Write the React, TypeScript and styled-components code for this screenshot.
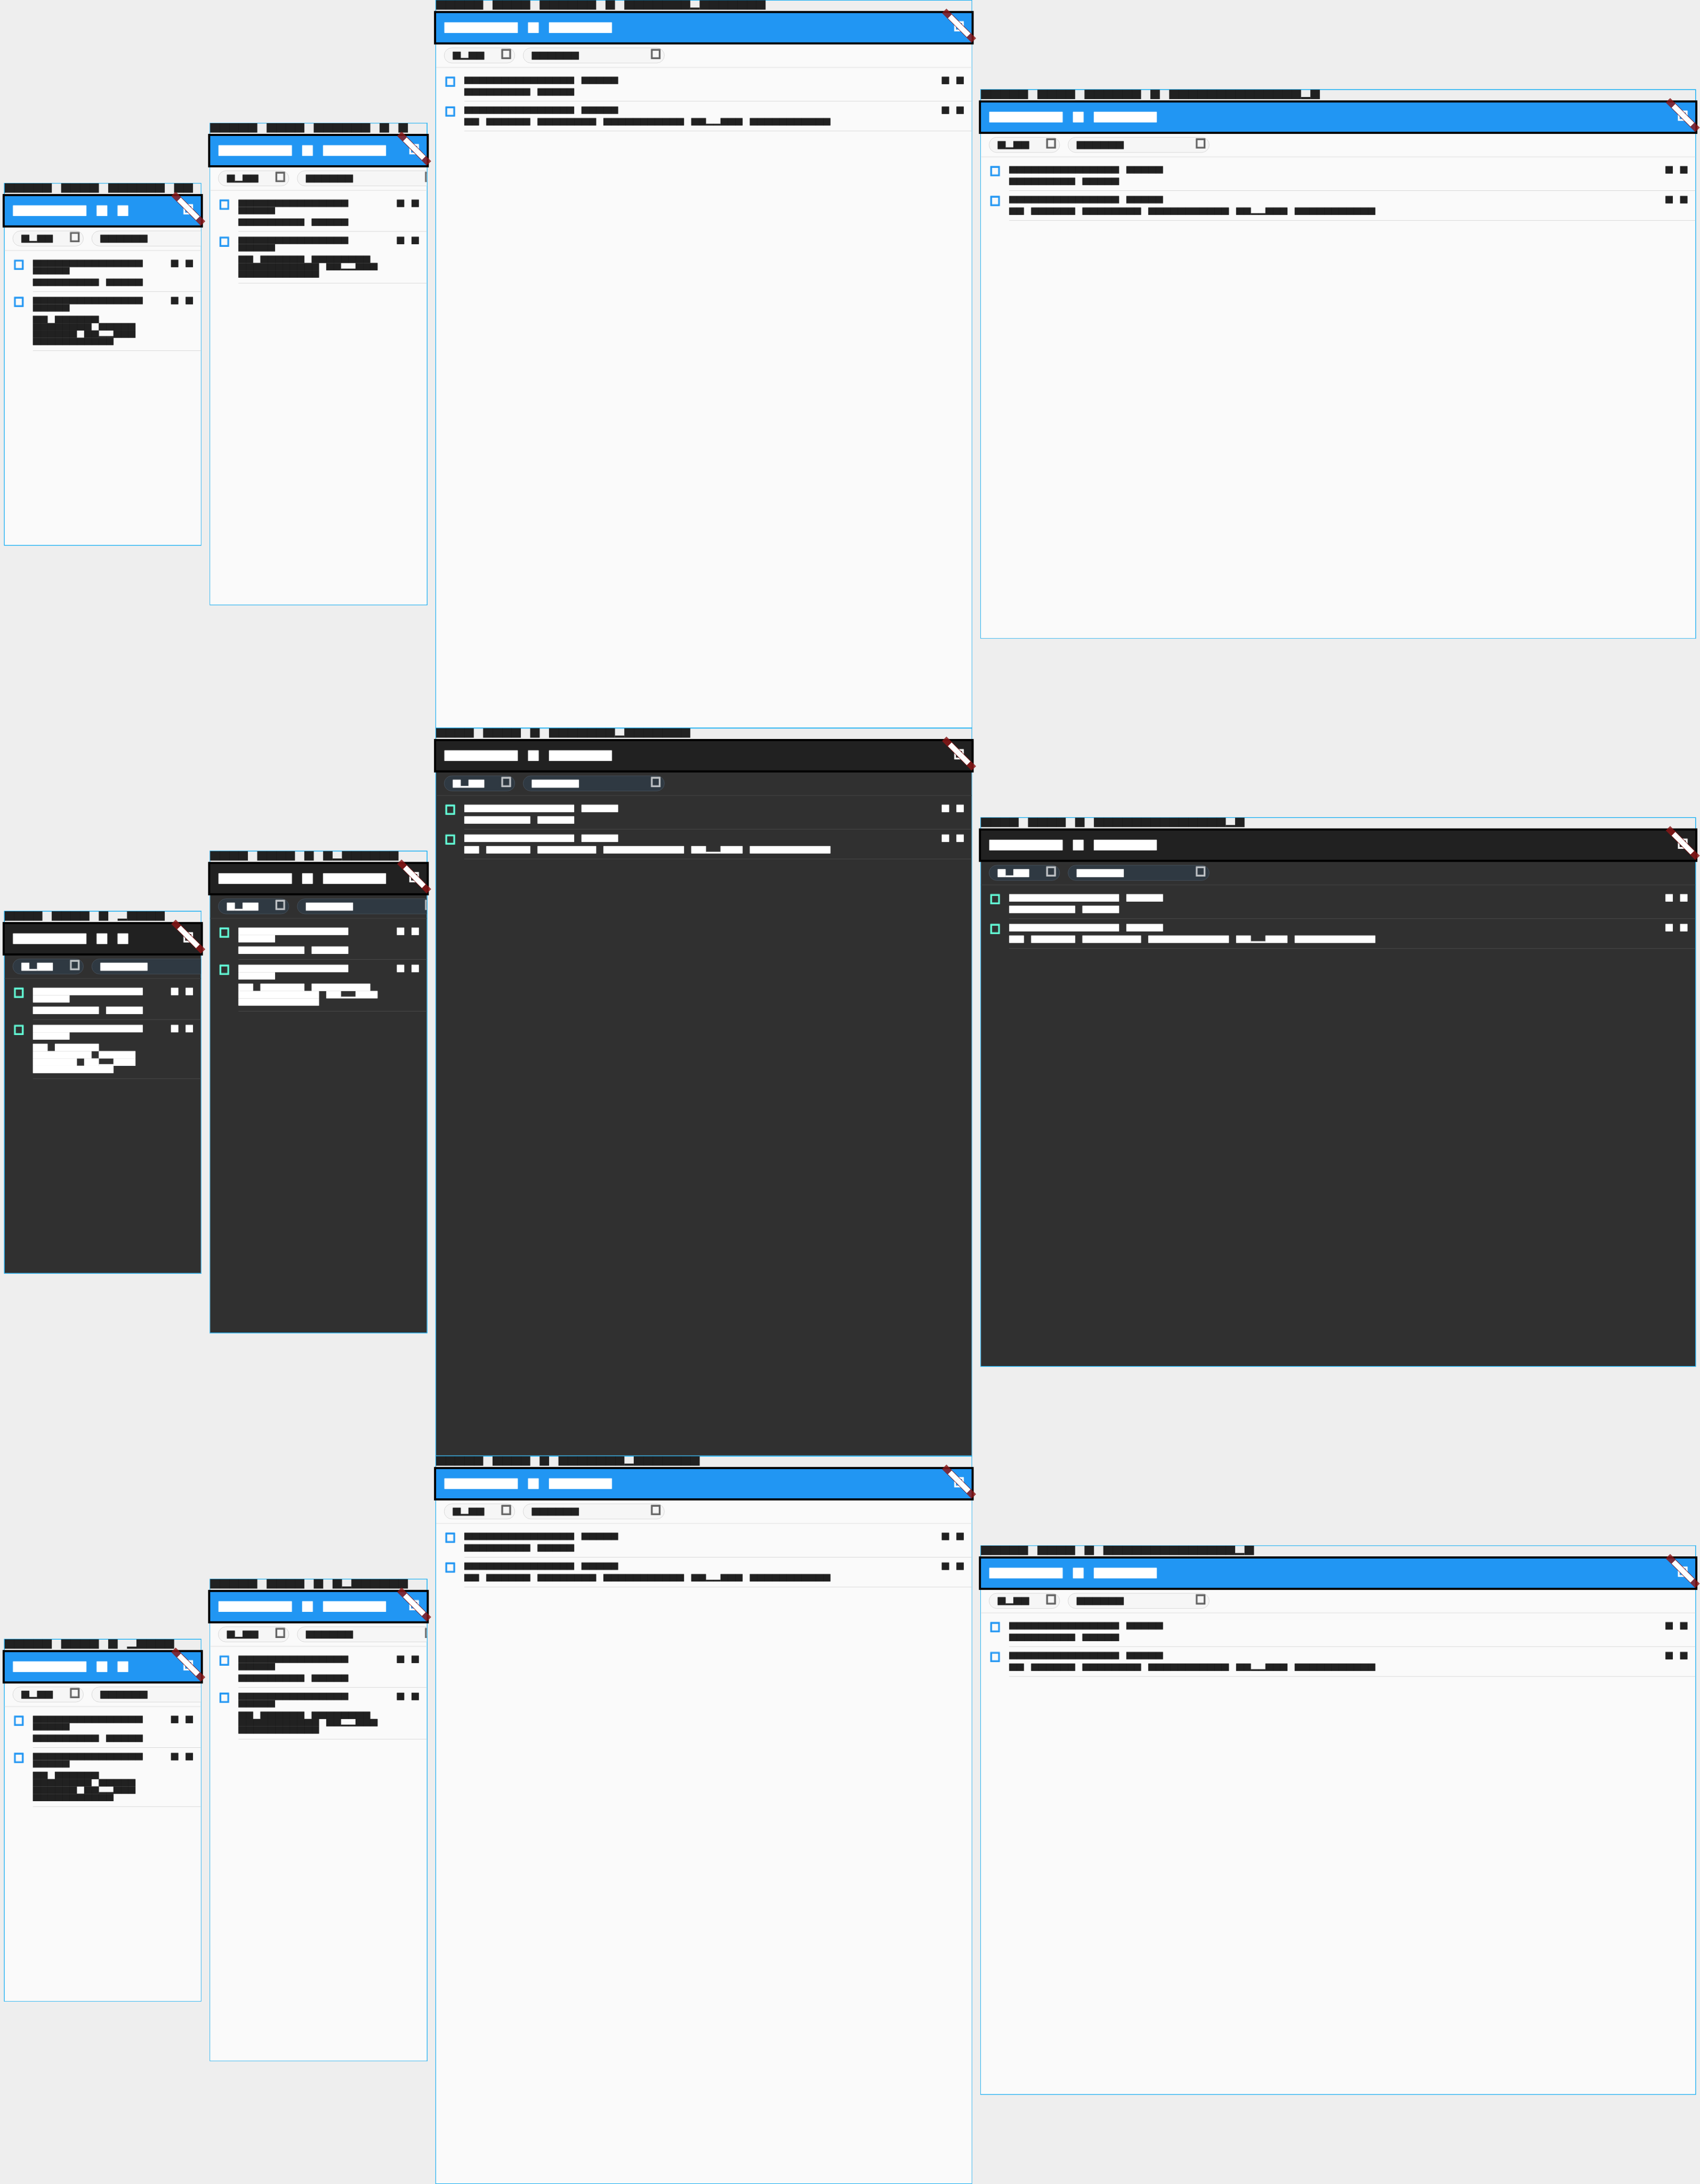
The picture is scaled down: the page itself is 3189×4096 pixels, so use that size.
import React from "react";
import styled, { createGlobalStyle, ThemeProvider } from "styled-components";

const SHEET_W = 3251;
const SHEET_H = 4176;
const VIEW_W = 3189;
const VIEW_H = 4096;

type Mode = {
  bar: string;
  surface: string;
  ink: string;
  chip: string;
  chipLine: string;
  chipIcon: string;
  accent: string;
  rule: string;
  line: string;
  seam: number;
};

const light: Mode = {
  bar: "#2196f3",
  surface: "#fafafa",
  ink: "33,33,33",
  chip: "#f6f6f6",
  chipLine: "#d8d8d8",
  chipIcon: "97,97,97",
  accent: "33,150,243",
  rule: "#ebebeb",
  line: "#d8d8d8",
  seam: 0.16,
};

const dark: Mode = {
  bar: "#212121",
  surface: "#303030",
  ink: "255,255,255",
  chip: "#2f3942",
  chipLine: "#454f59",
  chipIcon: "193,196,199",
  accent: "100,255,218",
  rule: "#3b3b3b",
  line: "#4b4b4b",
  seam: 0,
};

const Global = createGlobalStyle`
  html, body { margin: 0; background: #eeeeee; font-family: "Liberation Sans", sans-serif; }
  *, *::before, *::after { box-sizing: border-box; }
`;

const Viewport = styled.div`
  width: ${VIEW_W}px;
  height: ${VIEW_H}px;
  overflow: hidden;
  background: #eeeeee;
`;

const Sheet = styled.main`
  width: ${SHEET_W}px;
  height: ${SHEET_H}px;
  display: flex;
  flex-direction: column;
  transform: scale(${VIEW_W / SHEET_W}, ${VIEW_H / SHEET_H});
  transform-origin: 0 0;
`;

const Scenario = styled.section`
  height: 1392px;
  display: flex;
  align-items: center;
  gap: 16px;
  padding: 0 8px;
`;

const Frame = styled.article`
  flex: none;
  display: flex;
  flex-direction: column;
  border: 1px solid #03a9f4;
  box-shadow: 0 0 0 0.3px #03a9f4;
`;

const Caption = styled.div`
  height: 24px;
  transform: translateY(-0.5px);
`;

const Device = styled.div<{ $w: number; $h: number }>`
  width: ${(p) => p.$w}px;
  height: ${(p) => p.$h}px;
  display: flex;
  flex-direction: column;
  background: ${(p) => (p.theme as Mode).surface};
`;

const AppBar = styled.header`
  position: relative;
  z-index: 1;
  flex: none;
  height: 56px;
  display: flex;
  justify-content: space-between;
  padding: 18px 15px 0 16px;
  background: ${(p) => (p.theme as Mode).bar};
  box-shadow: 0 0 0 4px #000;
`;

const Banner = styled.div`
  position: absolute;
  top: 18px;
  right: -16px;
  width: 80px;
  height: 12px;
  display: flex;
  align-items: center;
  justify-content: center;
  transform: rotate(45deg);
  background: linear-gradient(rgba(183, 28, 28, 0.627), rgba(183, 28, 28, 0.627)), rgba(0, 0, 0, 0.5);
`;

const BannerLabel = styled.div`
  width: 51px;
  height: 10.2px;
  background: repeating-linear-gradient(90deg, #fff 0 9.9px, #f6eeee 9.9px 10.2px);
`;

const Tofu = styled.span<{ $ink: string }>`
  flex: none;
  width: 18px;
  height: 19px;
  border: 3px solid rgb(${(p) => p.$ink});
  box-shadow:
    0 -1px 0 rgba(${(p) => p.$ink}, 0.6),
    -1px 0 0 rgba(${(p) => p.$ink}, 0.25),
    1px 0 0 rgba(${(p) => p.$ink}, 0.2),
    inset 0 -1px 0 rgba(${(p) => p.$ink}, 0.45),
    inset -1px 0 0 rgba(${(p) => p.$ink}, 0.2),
    inset 1px 0 0 rgba(${(p) => p.$ink}, 0.15);
`;

const BarAction = styled.div`
  display: flex;
  margin-top: -2px;
`;

const Filters = styled.div`
  flex: none;
  height: 49px;
  display: flex;
  gap: 15px;
  padding: 10px 0 0 15px;
  overflow: hidden;
  border-bottom: 2px solid ${(p) => (p.theme as Mode).rule};
`;

const Chip = styled.div<{ $w: number }>`
  flex: none;
  width: ${(p) => p.$w}px;
  height: 30px;
  display: flex;
  justify-content: space-between;
  padding: 0 7px 0 16px;
  border: 1px solid ${(p) => (p.theme as Mode).chipLine};
  border-radius: 15px;
  background: ${(p) => (p.theme as Mode).chip};
`;

const ChipText = styled.div`
  padding-top: 7px;
`;

const ChipIcon = styled.div`
  display: flex;
  padding-top: 2px;
`;

const List = styled.div`
  flex: 1;
  padding-top: 7px;
`;

const Row = styled.div`
  display: flex;
  padding-left: 18px;
`;

const RowIcon = styled.div`
  width: 36px;
  padding-top: 10px;
  display: flex;
  align-items: flex-start;
`;

const RowBody = styled.div`
  flex: 1;
  display: flex;
  justify-content: space-between;
  padding: 10px 15px 10px 0;
  border-bottom: 1px solid ${(p) => (p.theme as Mode).line};
`;

const RowText = styled.div`
  display: flex;
  flex-direction: column;
  gap: 8px;
`;

type Kind = "caption" | "heading" | "chip" | "title" | "body";

/* Size and edge softness (top, sides, bottom, shaved last row) of each text style. */
const kinds: Record<Kind, { size: number; top: number; side: number; bottom: number; trim: number }> = {
  caption: { size: 18, top: 0, side: 0.08, bottom: 0, trim: 0 },
  heading: { size: 20, top: 0.3, side: 0.25, bottom: 0, trim: 0 },
  chip: { size: 15, top: 0.2, side: 0.15, bottom: 0.2, trim: 0 },
  title: { size: 14, top: 0.4, side: 0.06, bottom: 0, trim: 0.22 },
  body: { size: 14, top: 0.3, side: 0.15, bottom: 0, trim: 0 },
};

const Line = styled.div<{ $kind: Kind }>`
  display: flex;
  align-items: flex-end;
  font-size: ${(p) => kinds[p.$kind].size}px;
  height: 1em;
`;

const Space = styled.span<{ $n: number }>`
  width: ${(p) => p.$n}em;
`;

const Run = styled.span<{ $n: number; $low: boolean; $kind: Kind; $ink: string; $seam: number }>`
  flex: none;
  width: ${(p) => p.$n}em;
  height: ${(p) => (p.$low ? "0.2em" : "1em")};
  background:
    linear-gradient(rgba(250, 250, 250, ${(p) => (p.$seam ? kinds[p.$kind].trim : 0)}) 0 0) bottom / 100% 1px no-repeat,
    repeating-linear-gradient(90deg, rgba(0, 0, 0, ${(p) => p.$seam}) 0 1px, transparent 1px 1em),
    rgb(${(p) => p.$ink});
  box-shadow:
    0 -1px 0 rgba(${(p) => p.$ink}, ${(p) => kinds[p.$kind].top}),
    0 1px 0 rgba(${(p) => p.$ink}, ${(p) => kinds[p.$kind].bottom}),
    -1px 0 0 rgba(${(p) => p.$ink}, ${(p) => kinds[p.$kind].side}),
    1px 0 0 rgba(${(p) => p.$ink}, ${(p) => kinds[p.$kind].side});
`;

/* "x" is a full em square, "p" a descender-only square, a blank is one em wide. */
function Blocks({ lines, kind, ink, seam }: { lines: string[]; kind: Kind; ink: string; seam: number }) {
  return (
    <div>
      {lines.map((line, i) => (
        <Line key={i} $kind={kind}>
          {(line.match(/x+|p+|\s+/g) ?? []).map((part, j) =>
            part[0] === " " ? (
              <Space key={j} $n={part.length} />
            ) : (
              <Run key={j} $n={part.length} $low={part[0] === "p"} $kind={kind} $ink={ink} $seam={seam} />
            )
          )}
        </Line>
      ))}
    </div>
  );
}

type Screen = { w: number; h: number; heading: string; title: string[]; detail: string[] };

const n = (...parts: (number | string)[]) =>
  parts.map((p) => (typeof p === "number" ? "x".repeat(p) : p)).join("");

const wideTitle = [n(15, " ", 5)];
const wrappedTitle = [n(15), n(5)];
const wideDetail = [n(2, " ", 6, " ", 8, " ", 11, " ", 2, "pp", 3, " ", 11)];

const screens: Screen[] = [
  {
    w: 375,
    h: 667,
    heading: n(7, " ", 1, " ", 1),
    title: wrappedTitle,
    detail: [n(2, " ", 6), n(8, " ", 5), n(6, " ", 2, "pp", 3), n(11)],
  },
  {
    w: 414,
    h: 896,
    heading: n(7, " ", 1, " ", 6),
    title: wrappedTitle,
    detail: [n(2, " ", 6, " ", 8), n(11, " ", 2, "pp", 3), n(11)],
  },
  { w: 1024, h: 1366, heading: n(7, " ", 1, " ", 6), title: wideTitle, detail: wideDetail },
  { w: 1366, h: 1024, heading: n(7, " ", 1, " ", 6), title: wideTitle, detail: wideDetail },
];

const scenarios: { mode: Mode; captions: string[] }[] = [
  {
    mode: light,
    captions: [
      n(5, " ", 4, " ", 6, " ", 2),
      n(5, " ", 4, " ", 6, " ", 1, " ", 1),
      n(5, " ", 4, " ", 6, " ", 1, " ", 7, "p", 7),
      n(5, " ", 4, " ", 6, " ", 1, " ", 14, "p", 1),
    ],
  },
  {
    mode: dark,
    captions: [
      n(4, " ", 4, " ", 1, " ", "p", 4),
      n(4, " ", 4, " ", 1, " ", 1, "p", 6),
      n(4, " ", 4, " ", 1, " ", 7, "p", 7),
      n(4, " ", 4, " ", 1, " ", 14, "p", 1),
    ],
  },
  {
    mode: light,
    captions: [
      n(5, " ", 4, " ", 1, " ", "p", 4),
      n(5, " ", 4, " ", 1, " ", 1, "p", 6),
      n(5, " ", 4, " ", 1, " ", 7, "p", 7),
      n(5, " ", 4, " ", 1, " ", 14, "p", 1),
    ],
  },
];

function Item({ mode, title, detail }: { mode: Mode; title: string[]; detail: string[] }) {
  return (
    <Row>
      <RowIcon>
        <Tofu $ink={mode.accent} />
      </RowIcon>
      <RowBody>
        <RowText>
          <Blocks lines={title} kind="title" ink={mode.ink} seam={mode.seam} />
          <Blocks lines={detail} kind="body" ink={mode.ink} seam={mode.seam} />
        </RowText>
        <Blocks lines={["x x"]} kind="title" ink={mode.ink} seam={0} />
      </RowBody>
    </Row>
  );
}

function Golden({ mode, screen, caption }: { mode: Mode; screen: Screen; caption: string }) {
  return (
    <Frame>
      <Caption>
        <Blocks lines={[caption]} kind="caption" ink="33,33,33" seam={0.16} />
      </Caption>
      <Device $w={screen.w} $h={screen.h}>
        <AppBar>
          <Blocks lines={[screen.heading]} kind="heading" ink="255,255,255" seam={0} />
          <BarAction>
            <Tofu $ink="255,255,255" />
          </BarAction>
          <Banner>
            <BannerLabel />
          </Banner>
        </AppBar>
        <Filters>
          <Chip $w={136}>
            <ChipText>
              <Blocks lines={["xpxx"]} kind="chip" ink={mode.ink} seam={mode.seam} />
            </ChipText>
            <ChipIcon>
              <Tofu $ink={mode.chipIcon} />
            </ChipIcon>
          </Chip>
          <Chip $w={271}>
            <ChipText>
              <Blocks lines={["xxxxxx"]} kind="chip" ink={mode.ink} seam={mode.seam} />
            </ChipText>
            <ChipIcon>
              <Tofu $ink={mode.chipIcon} />
            </ChipIcon>
          </Chip>
        </Filters>
        <List>
          <Item mode={mode} title={screen.title} detail={[n(9, " ", 5)]} />
          <Item mode={mode} title={screen.title} detail={screen.detail} />
        </List>
      </Device>
    </Frame>
  );
}

export default function App() {
  return (
    <Viewport>
      <Global />
      <Sheet>
        {scenarios.map((s, i) => (
          <ThemeProvider key={i} theme={s.mode}>
            <Scenario>
              {screens.map((screen, j) => (
                <Golden key={j} mode={s.mode} screen={screen} caption={s.captions[j]} />
              ))}
            </Scenario>
          </ThemeProvider>
        ))}
      </Sheet>
    </Viewport>
  );
}
